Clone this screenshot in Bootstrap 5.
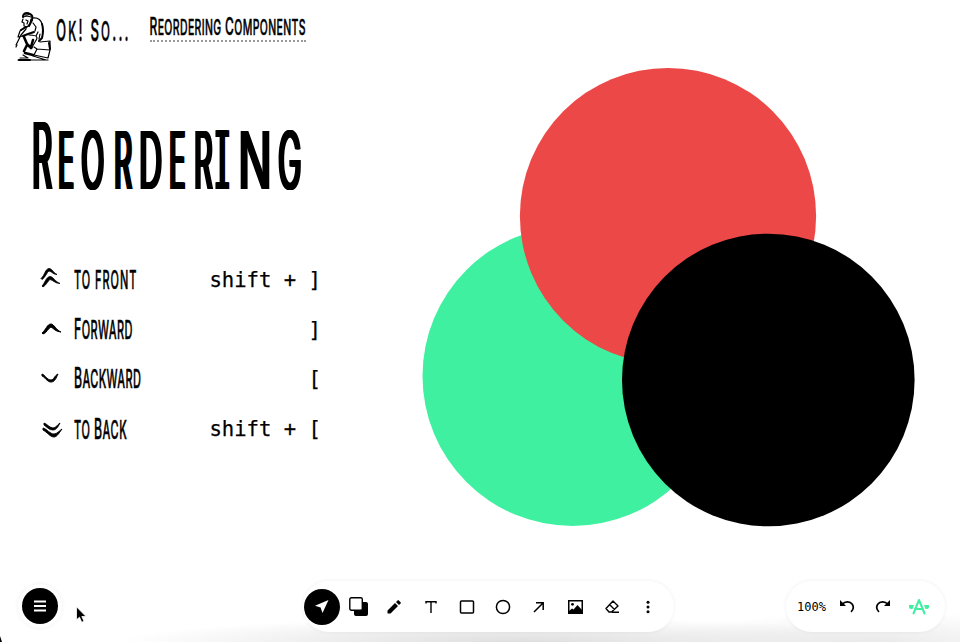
<!DOCTYPE html>
<html lang="en">
<head>
<meta charset="utf-8">
<meta name="viewport" content="width=device-width, initial-scale=1">
<title>Ok! So... Reordering Components</title>
<link href="https://cdn.jsdelivr.net/npm/bootstrap@5.3.0/dist/css/bootstrap.min.css" rel="stylesheet">
<style>
body{font-family:Inter,sans-serif;color:#000;background:#fff}
.board{height:642px;background:radial-gradient(ellipse 400px 24px at 520px 100%,#dedede,transparent),radial-gradient(ellipse 220px 30px at 880px 100%,#ebebeb,transparent),#fff}
svg{display:block;flex:none;overflow:visible}
.hand{font-family:Inter,sans-serif;font-weight:500;fill:#000;stroke:#000;stroke-width:.5px;stroke-linejoin:round}
.topbar{height:105px;padding:10px 0 0 15px}
.doc-title{margin-left:16px;height:32px;border-bottom:2px dotted #999;width:156px}
.headline{margin:11px 0 0 32px;height:80px;font-size:80px;line-height:80px;font-weight:400;white-space:nowrap}
.headline span{display:inline-block;width:calc(var(--w)*1px);transform:scaleX(var(--s));transform-origin:0 50%;text-shadow:calc(1.5px/var(--s)) 0,calc(-1.2px/var(--s)) 0,calc(.7px/var(--s)) .4px,calc(-.6px/var(--s)) -.4px}
.headline .cap{font-size:92px}
.headline .slab{font-family:"DejaVu Sans Mono",monospace}
.keys{margin:59px 0 0 40px;width:281px}
.keys li{height:50px}
.mono{font:20.6px/26px "DejaVu Sans Mono",monospace;white-space:pre;-webkit-text-stroke:.25px #000}
.discs{left:0;top:0;pointer-events:none}
.dock{padding:0 15px 10px 18px}
.bubble{background:#fff;box-shadow:0 0 4px #0001}
.menu-ring{width:44px;height:44px;margin-bottom:4px}
.round{width:36px;height:36px;background:#000}
.tools{width:371px;height:51px;padding-left:1px;margin-left:241px}
.tools>div,.view>div{width:36.2px;height:36px}
.view{width:159px;height:51px;padding-left:11px}
.zoomlevel{font:500 12px "DejaVu Sans Mono",monospace;width:32px!important;letter-spacing:0}
.pointer{left:75px;top:606px}
.corner{left:0;bottom:0}
</style>
<script src="https://cdn.jsdelivr.net/npm/bootstrap@5.3.0/dist/js/bootstrap.bundle.min.js"></script>
</head>
<body>
<main class="board position-relative overflow-hidden d-flex flex-column">
  <svg class="discs position-absolute" width="960" height="642">
    <circle cx="572.5" cy="376" r="150" fill="#3ef09f"/>
    <circle cx="668" cy="216" r="148.1" fill="#eb4847"/>
    <circle cx="768.3" cy="380" r="146.3" fill="#000"/>
  </svg>
  <header class="topbar d-flex align-items-start">
    <svg width="36" height="52" viewBox="0 0 36 52" fill="none" stroke="#000" stroke-width="1.2" stroke-linecap="round" stroke-linejoin="round">
      <path stroke-width="2" d="M8 7C8 3 12 2 15 4c2 1 3 3 2 6"/>
      <path d="M8 7l4-1 4 1M10 5l5-.5M17 8c6-1 9 2 10 6M8 9l-1 3 2 1v3l3 1M11 10l2 1-1 3M16 9l-1 5-4 4M18 13l3 4-1 4"/>
      <path stroke-width="2" d="M27 14c2 6 1 10 0 14l-3 3M17 10l-3 6M19 22l-6 2-5 2M11 17l-5 3"/>
      <path d="M11 19l-5 6-5 10M9 18l-4 3-2 6 5-1M14 25c6 0 8 1 8 3s-4 6-5 10M23 22l-2 4M25 24l-1 5"/>
      <path stroke-width="2.6" d="M9 27l3 7 4 4M12 35l-3 6M18 30l-2 7M10 43l8 2"/>
      <path d="M2 35l-1 2M25 32l10-1v9l-2 8-14-3 3-6 13 1M22 39l-3-2M3 50h30M5 48h8l-5-3M18 46l13 4"/>
      <path stroke-width="2" d="M34 33l1 6M4 50h11"/>
    </svg>
    <svg width="78" height="40" style="margin-left:5px">
      <text class="hand" transform="translate(0 31) scale(.44 1)" font-size="30" textLength="165">O<tspan font-size="26.5">K</tspan>! S<tspan font-size="26.5">O</tspan>...</text>
    </svg>
    <div class="doc-title">
      <svg width="156" height="30">
        <text class="hand" transform="translate(-.5 25) scale(.5 1)" font-size="24" textLength="312">R<tspan font-size="21">EORDERING</tspan> C<tspan font-size="21">OMPONENTS</tspan></text>
      </svg>
    </div>
  </header>
  <h1 class="headline"><span class="cap" style="--w:26;--s:.34">R</span><span style="--w:22.7;--s:.33">E</span><span style="--w:33;--s:.38">O</span><span style="--w:25;--s:.35">R</span><span style="--w:30.5;--s:.4">D</span><span style="--w:24.5;--s:.34">E</span><span style="--w:20.500;--s:.36">R</span><span class="slab" style="--w:23.500;--s:.34">I</span><span style="--w:40.500;--s:.56">N</span><span style="--w:26;--s:.39">G</span></h1>
  <ul class="keys list-unstyled mb-0">
    <li class="d-flex align-items-center">
      <svg width="34" height="26" fill="#000"><path d="M1 11.500C5 8 5 2 9 1.500c3 0 4 4 8 6-4 0-5-3-8-3.500-2 1-4 7-7 8.500zM2 19C5 16 6 10 10 9.500c3 0 5 5 10 7-5 0-7-3.500-10-4-2 1-4 6-7 7.500z" stroke="#000" stroke-width=".8"/></svg>
      <svg width="64" height="26"><text class="hand" transform="translate(0 22) scale(.44 1)" font-size="25" textLength="142">TO FRONT</text></svg>
      <span class="mono ms-auto">shift + ]</span>
    </li>
    <li class="d-flex align-items-center">
      <svg width="34" height="24" fill="#000"><path d="M2 15C6 12 7 6 11 6c3 0 5 6 10 8-5 0-8-4-10-5-3 1-4 6-8 7z" stroke="#000" stroke-width="1"/></svg>
      <svg width="60" height="26"><text class="hand" transform="translate(0 22) scale(.44 1)" font-size="28" textLength="133">F<tspan font-size="25">ORWARD</tspan></text></svg>
      <span class="mono ms-auto">]</span>
    </li>
    <li class="d-flex align-items-center" style="margin-top:-1px">
      <svg width="34" height="24" fill="#000"><path d="M2 7c3 1 5 6 9 6 3 0 3-4 7-6-2 4-3 8-7 8C7 15 5 10 2 9z" stroke="#000" stroke-width="1"/></svg>
      <svg width="68" height="26"><text class="hand" transform="translate(0 21.500) scale(.44 1)" font-size="28" textLength="152">B<tspan font-size="25">ACKWARD</tspan></text></svg>
      <span class="mono ms-auto">[</span>
    </li>
    <li class="d-flex align-items-center">
      <svg width="34" height="24" fill="#000"><path d="M4 6c3 1 6 5 9 5s4-3 7-5c-2 4-4 7-7 7-4 0-6-3-9-5zM3 11c4 1 7 6 11 6 3 0 5-3 8-5-3 4-5 8-8 8-4 0-7-5-11-7z" stroke="#000" stroke-width=".9"/></svg>
      <svg width="54" height="26"><text class="hand" transform="translate(0 23) scale(.44 1)" font-size="25" textLength="120">TO <tspan font-size="28">B</tspan>ACK</text></svg>
      <span class="mono ms-auto">shift + [</span>
    </li>
  </ul>
  <footer class="dock d-flex align-items-end mt-auto">
    <div class="menu-ring bubble rounded-circle d-flex align-items-center justify-content-center">
      <div class="round rounded-circle d-flex align-items-center justify-content-center">
        <svg width="12" height="12" stroke="#fff" stroke-width="1.800"><path d="M0 1.500h12M0 6h12M0 10.500h12"/></svg>
      </div>
    </div>
    <div class="tools bubble rounded-pill d-flex align-items-center">
      <div class="round rounded-circle d-flex align-items-center justify-content-center"><svg width="14" height="14" fill="#fff"><path d="M13.500 0L7.500 13 5.600 7.600 0 5.800z"/></svg></div>
      <div class="d-flex align-items-center justify-content-center"><svg width="19" height="19"><rect x="5" y="5" width="14" height="14" rx="2"/><rect x=".8" y=".8" width="12.500" height="12.500" rx="1.500" fill="#fff" stroke="#000" stroke-width="1.400"/></svg></div>
      <div class="d-flex align-items-center justify-content-center"><svg width="14" height="14"><path d="M.5 13.500v-3L8 3l3 3-7.500 7.500zM9 2l1.600-1.600q.6-.6 1.200 0l1.800 1.800q.6.600 0 1.200L12 5z"/></svg></div>
      <div class="d-flex align-items-center justify-content-center"><svg width="12" height="12" fill="none" stroke="#000" stroke-width="1.400"><path d="M1 2.500V.8h10v1.700M6 1v11"/></svg></div>
      <div class="d-flex align-items-center justify-content-center"><svg width="14" height="14"><rect x=".5" y="1" width="13" height="12" rx="1" fill="none" stroke="#000" stroke-width="1.500"/></svg></div>
      <div class="d-flex align-items-center justify-content-center"><svg width="14" height="14"><circle cx="7" cy="7" r="6.600" fill="none" stroke="#000" stroke-width="1.500"/></svg></div>
      <div class="d-flex align-items-center justify-content-center"><svg width="10" height="10" fill="none" stroke="#000" stroke-width="1.500"><path d="M0 10L9 1M2 .8h7.200V8"/></svg></div>
      <div class="d-flex align-items-center justify-content-center"><svg width="15" height="14"><rect x=".75" y=".75" width="13.500" height="12.500" fill="#fff" stroke="#000" stroke-width="1.500"/><circle cx="4.500" cy="4.300" r="1.400"/><path d="M1 13v-2l3-2.500 1.500 1L9.500 5l4.500 5v3z"/></svg></div>
      <div class="d-flex align-items-center justify-content-center"><svg width="14" height="14" fill="none" stroke="#000" stroke-width="1.400" stroke-linejoin="round"><path d="M8 1l5 5-6.500 6H4L1 8.500zM4.500 4.500l5 5M7 12.300h7"/></svg></div>
      <div class="d-flex align-items-center justify-content-center"><svg width="4" height="14"><circle cx="2" cy="2.300" r="1.500"/><circle cx="2" cy="7" r="1.500"/><circle cx="2" cy="11.700" r="1.500"/></svg></div>
    </div>
    <div class="view bubble rounded-pill d-flex align-items-center ms-auto">
      <div class="zoomlevel d-flex align-items-center">100%</div>
      <div class="d-flex align-items-center justify-content-center"><svg width="14" height="13" fill="none" stroke="#000" stroke-width="1.700"><path d="M2 4.500C5 1 10 1 12.300 4.200c1.500 2.400 1 5.500-1.300 7.600"/><path d="M0 0v6h6z" fill="#000" stroke="none"/></svg></div>
      <div class="d-flex align-items-center justify-content-center"><svg width="14" height="13" fill="none" stroke="#000" stroke-width="1.700"><path d="M12 4.500C9 1 4 1 1.700 4.200.2 6.600.7 9.700 3 11.800"/><path d="M14 0v6H8z" fill="#000" stroke="none"/></svg></div>
      <div class="d-flex align-items-center justify-content-center"><svg width="22" height="16" fill="none" stroke="#3ef09f" stroke-width="2"><path d="M5.500 14.500L11 1l5.500 13.500M7 10h8" stroke-linecap="round" stroke-linejoin="round"/><path d="M1 6h5L4.500 10H3Q1 10 1 8zM21 6h-5l1.500 4H19q2 0 2-2z" fill="#3ef09f" stroke="none"/></svg></div>
    </div>
  </footer>
  <svg class="pointer position-absolute" width="12" height="17"><path d="M1.500.8v13l3-2.600 2.200 5 2.300-1-2.200-4.700H11z" stroke="#fff" stroke-width=".8"/></svg>
  <svg class="corner position-absolute" width="3" height="6"><path d="M0 0l2 6H0z"/></svg>
</main>
</body>
</html>
